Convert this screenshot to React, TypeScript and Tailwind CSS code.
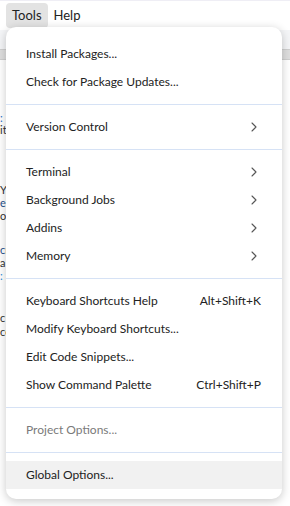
import { ChevronRight } from "lucide-react";

type Item =
  | { kind: "item"; label: string; sub?: boolean; shortcut?: string; disabled?: boolean; active?: boolean }
  | { kind: "sep" };

const ITEMS: Item[] = [
  { kind: "item", label: "Install Packages..." },
  { kind: "item", label: "Check for Package Updates..." },
  { kind: "sep" },
  { kind: "item", label: "Version Control", sub: true },
  { kind: "sep" },
  { kind: "item", label: "Terminal", sub: true },
  { kind: "item", label: "Background Jobs", sub: true },
  { kind: "item", label: "Addins", sub: true },
  { kind: "item", label: "Memory", sub: true },
  { kind: "sep" },
  { kind: "item", label: "Keyboard Shortcuts Help", shortcut: "Alt+Shift+K" },
  { kind: "item", label: "Modify Keyboard Shortcuts..." },
  { kind: "item", label: "Edit Code Snippets..." },
  { kind: "item", label: "Show Command Palette", shortcut: "Ctrl+Shift+P" },
  { kind: "sep" },
  { kind: "item", label: "Project Options...", disabled: true },
  { kind: "sep" },
  { kind: "item", label: "Global Options...", active: true },
];

// fragments of the editor text peeking out left of the menu
const PEEK: { y: number; t: string; c: string }[] = [
  { y: 112, t: ":", c: "text-[#1a6fc9]" },
  { y: 124, t: "it", c: "text-[#333]" },
  { y: 184, t: "Y", c: "text-[#333]" },
  { y: 197, t: "er", c: "text-[#1f4f8a]" },
  { y: 210, t: "ou", c: "text-[#333]" },
  { y: 244, t: "cr", c: "text-[#1f4f8a]" },
  { y: 257, t: "a", c: "text-[#333]" },
  { y: 270, t: ":", c: "text-[#2a8ad8]" },
  { y: 312, t: "c", c: "text-[#333]" },
  { y: 326, t: "ce", c: "text-[#333]" },
];

export default function App() {
  return (
    <div
      className="relative w-[290px] h-[506px] overflow-hidden bg-white text-[13px]"
      style={{ fontFamily: '"Segoe UI", Lato, "Noto Sans", sans-serif' }}
    >
      {/* Menubar */}
      <div className="h-[30px] flex items-center px-[6px] gap-[2px] text-[#222] border-t border-[#efeef5]">
        <div className="h-[25px] px-[6px] flex items-center rounded-[4px] bg-[#e3e3e3]">Tools</div>
        <div className="h-[25px] px-[4px] flex items-center">Help</div>
      </div>

      {/* Toolbars behind */}
      <div className="h-[20px] bg-[#f4f5f7] border-b border-[#cfcfcf]" />
      <div className="h-[10px] bg-[#dedede] border-b border-[#cfcfcf]" />

      {/* Editor text behind */}
      {PEEK.map((p, i) => (
        <div key={i} className={`absolute left-0 leading-none text-[11px] ${p.c}`} style={{ top: p.y }}>
          {p.t}
        </div>
      ))}

      {/* Dropdown menu */}
      <div className="absolute left-[6px] top-[27px] w-[276px] bg-white rounded-[10px] shadow-[0_2px_10px_rgba(0,0,0,0.22)] pt-[13px] pb-[10px] text-[12px] text-[#222]">
        {ITEMS.map((it, i) =>
          it.kind === "sep" ? (
            <div key={i} className="h-[17px] flex items-center">
              <div className="w-full h-px bg-[#d6e2f5]" />
            </div>
          ) : (
            <div
              key={i}
              className={`h-[28px] flex items-center pl-[20px] pr-[20px] ${it.active ? "bg-[#f1f1f1]" : ""} ${
                it.disabled ? "text-[#7a7a7a]" : ""
              }`}
            >
              <span className="flex-1">{it.label}</span>
              {it.shortcut && <span className="mr-[1px]">{it.shortcut}</span>}
              {it.sub && <ChevronRight size={16} strokeWidth={1.6} className="text-[#555]" />}
            </div>
          )
        )}
      </div>
    </div>
  );
}
